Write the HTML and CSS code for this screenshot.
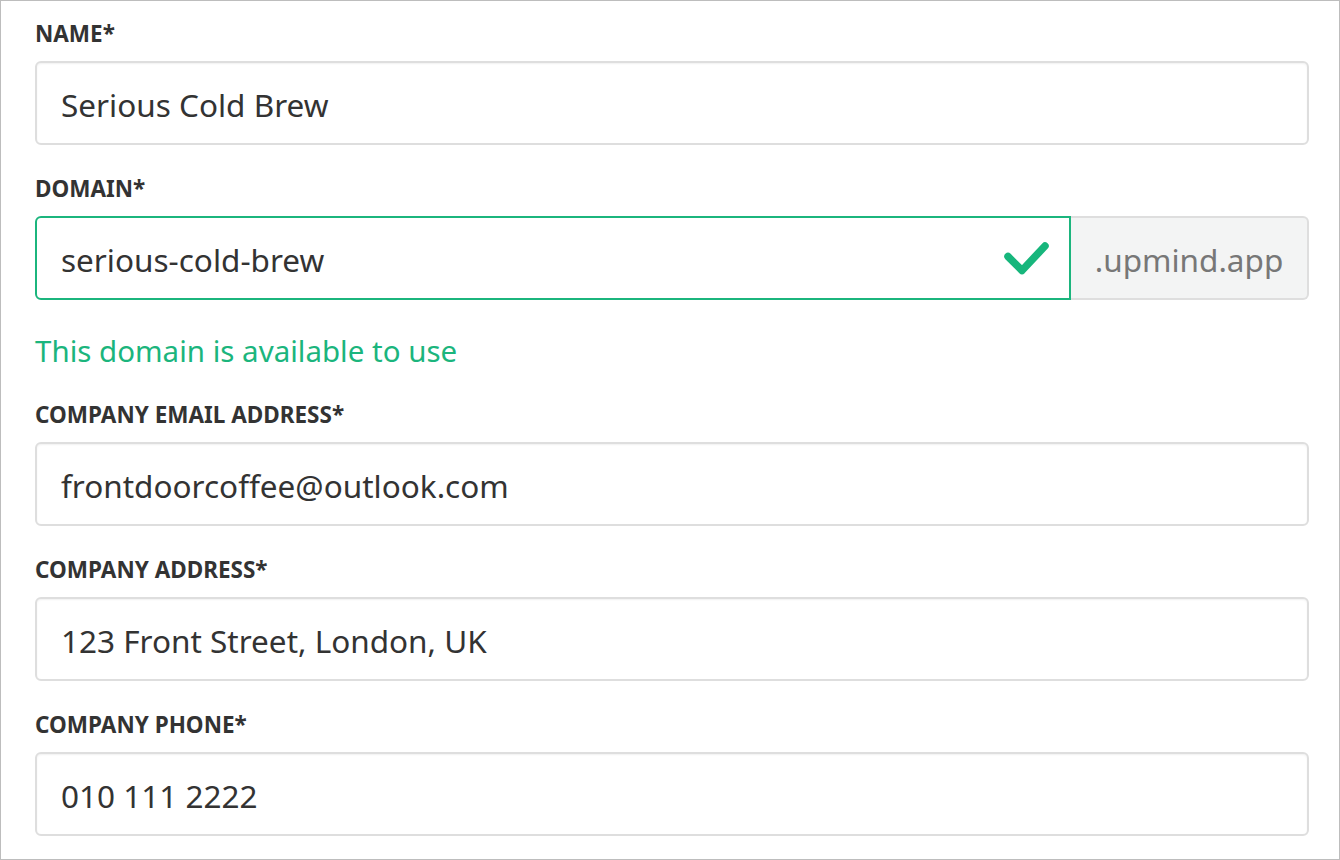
FILE: index.html
```html
<!DOCTYPE html>
<html>
<head>
<meta charset="utf-8">
<link rel="stylesheet" href="styles.css">
</head>
<body>
<div class="panel">
  <div class="field">
    <div class="label">NAME*</div>
    <div class="input">Serious Cold Brew</div>
  </div>
  <div class="field">
    <div class="label">DOMAIN*</div>
    <div class="group">
      <div class="input input-valid">
        <span>serious-cold-brew</span>
        <svg class="check" width="48" height="36" viewBox="0 0 48 36"><polyline points="5,16.5 19,30.5 42,6" fill="none" stroke="#17b67c" stroke-width="7.5" stroke-linecap="round" stroke-linejoin="round"/></svg>
      </div>
      <div class="addon">.upmind.app</div>
    </div>
    <div class="help">This domain is available to use</div>
  </div>
  <div class="field">
    <div class="label">COMPANY EMAIL ADDRESS*</div>
    <div class="input">frontdoorcoffee@outlook.com</div>
  </div>
  <div class="field">
    <div class="label">COMPANY ADDRESS*</div>
    <div class="input">123 Front Street, London, UK</div>
  </div>
  <div class="field">
    <div class="label">COMPANY PHONE*</div>
    <div class="input">010 111 2222</div>
  </div>
</div>
</body>
</html>
```

FILE: styles.css
```css
html, body {
  margin: 0;
  padding: 0;
  background: #fff;
}
body {
  font-family: "Noto Sans", "Open Sans", sans-serif;
  color: #333;
}
.panel {
  box-sizing: border-box;
  width: 1340px;
  height: 860px;
  border: 1px solid #bdbdbd;
  padding: 18px 30px 0 34px;
  overflow: hidden;
}
.field {
  margin-bottom: 29px;
}
.label {
  font-size: 22.5px;
  font-weight: 700;
  line-height: 30px;
  margin-bottom: 12px;
  color: #333;
}
.input {
  box-sizing: border-box;
  height: 84px;
  border: 2px solid #dedede;
  border-radius: 6px;
  box-shadow: inset 0 1px 2px rgba(0,0,0,0.06);
  padding: 3px 24px 0;
  display: flex;
  align-items: center;
  font-size: 31.5px;
  color: #333;
  background: #fff;
}
.group {
  display: flex;
}
.input-valid {
  flex: 1;
  border-color: #1bb57d;
  border-radius: 6px 0 0 6px;
  justify-content: space-between;
  padding-right: 18px;
  padding-top: 0;
  box-shadow: none;
}
.input-valid span {
  padding-top: 3px;
}
.check {
  display: block;
}
.addon {
  box-sizing: border-box;
  width: 238px;
  height: 84px;
  display: flex;
  align-items: center;
  justify-content: center;
  padding-top: 3px;
  background: #f3f4f4;
  border: 2px solid #dedede;
  border-left: none;
  border-radius: 0 6px 6px 0;
  font-size: 31.5px;
  color: #777;
}
.help {
  margin-top: 31px;
  margin-bottom: 1px;
  font-size: 29.5px;
  line-height: 40px;
  color: #1bb57d;
}
```
